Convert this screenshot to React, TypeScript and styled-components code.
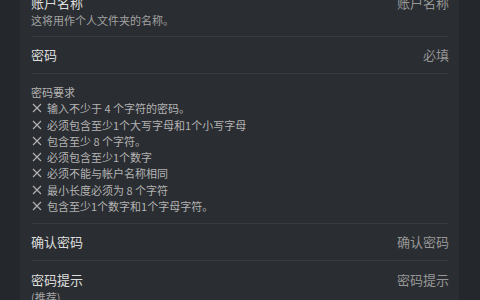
import styled, { createGlobalStyle } from 'styled-components';

const GlobalStyle = createGlobalStyle`
  html, body {
    margin: 0;
    padding: 0;
    background: #24272b;
    overflow: hidden;
  }
  body {
    font-family: "Noto Sans CJK SC", "Noto Sans", "Liberation Sans", sans-serif;
  }
`;

const _Page = styled.div`
  width: 480px;
  height: 300px;
  display: flex;
  justify-content: center;
  background-color: #24272b;
  overflow: hidden;
`;

const _Panel = styled.div`
  width: 439px;
  margin-left: 20px;
  margin-right: 21px;
  padding: 0 10px 0 11px;
  box-sizing: border-box;
  background-color: #2a2d31;
  margin-top: -5px;
`;

const _Row = styled.div`
  display: flex;
  justify-content: space-between;
  align-items: center;
  min-height: 37px;
  border-bottom: 1px solid #36393d;
  box-sizing: border-box;
`;

const _FirstRow = styled(_Row)`
  align-items: flex-start;
  padding-bottom: 9px;
`;

const _Label = styled.div`
  display: flex;
  flex-direction: column;
`;

const _Title = styled.div`
  font-size: 13px;
  line-height: 16px;
  color: #dedede;
`;

const _Sub = styled.div`
  font-size: 11px;
  line-height: 14px;
  color: #a3a3a3;
  margin-top: 2px;
`;

const _Placeholder = styled.div`
  font-size: 13px;
  line-height: 16px;
  color: #979797;
`;

const _Requirements = styled.div`
  display: flex;
  flex-direction: column;
  padding: 10px 0 9px;
  border-bottom: 1px solid #36393d;
`;

const _ReqLine = styled.div`
  display: flex;
  align-items: center;
  gap: 5px;
  font-size: 11px;
  line-height: 16.25px;
  height: 16.25px;
  color: #b4b4b4;
`;

const _CrossIcon = styled.svg`
  width: 10px;
  height: 10px;
  margin-left: 1px;
  flex-shrink: 0;
`;

const _LastRow = styled.div`
  display: flex;
  justify-content: space-between;
  align-items: flex-start;
  padding-top: 11px;
`;

const Cross = () => (
  <_CrossIcon viewBox="0 0 10 10">
    <path d="M1 1 L9 9 M9 1 L1 9" stroke="#b4b4b4" strokeWidth="1.1" fill="none" />
  </_CrossIcon>
);

const requirements = [
  '输入不少于 4 个字符的密码。',
  '必须包含至少1个大写字母和1个小写字母',
  '包含至少 8 个字符。',
  '必须包含至少1个数字',
  '必须不能与帐户名称相同',
  '最小长度必须为 8 个字符',
  '包含至少1个数字和1个字母字符。',
];

export default function App() {
  return (
    <_Page>
      <GlobalStyle />
      <_Panel>
        <_FirstRow>
          <_Label>
            <_Title>账户名称</_Title>
            <_Sub>这将用作个人文件夹的名称。</_Sub>
          </_Label>
          <_Placeholder>账户名称</_Placeholder>
        </_FirstRow>
        <_Row>
          <_Title>密码</_Title>
          <_Placeholder>必填</_Placeholder>
        </_Row>
        <_Requirements>
          <_ReqLine>密码要求</_ReqLine>
          {requirements.map(r => (
            <_ReqLine key={r}>
              <Cross />
              {r}
            </_ReqLine>
          ))}
        </_Requirements>
        <_Row>
          <_Title>确认密码</_Title>
          <_Placeholder>确认密码</_Placeholder>
        </_Row>
        <_LastRow>
          <_Label>
            <_Title>密码提示</_Title>
            <_Sub>(推荐)</_Sub>
          </_Label>
          <_Placeholder>密码提示</_Placeholder>
        </_LastRow>
      </_Panel>
    </_Page>
  );
}
